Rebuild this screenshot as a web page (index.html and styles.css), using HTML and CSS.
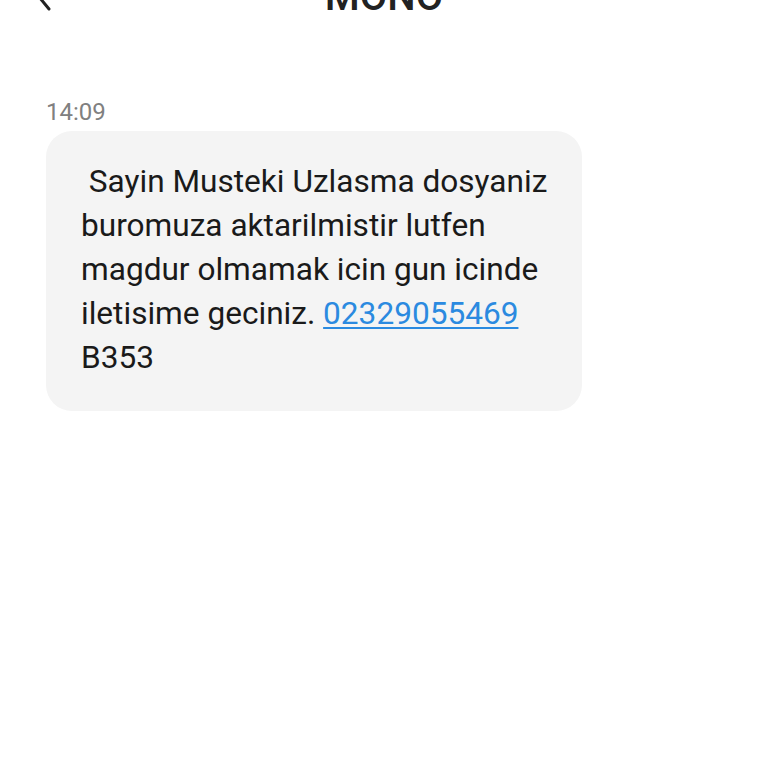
FILE: index.html
```html
<!DOCTYPE html>
<html lang="tr">
<head>
<meta charset="utf-8">
<title>MONO</title>
<link rel="stylesheet" href="styles.css">
</head>
<body>
<header class="topbar">
  <div class="back">
    <svg class="back-icon" width="30" height="40" viewBox="0 0 30 40">
      <path d="M23 0 L9 15 L23 32" fill="none" stroke="#222" stroke-width="3" stroke-linecap="round" stroke-linejoin="round"/>
    </svg>
  </div>
  <h1 class="title">MONO</h1>
  <div></div>
</header>
<main class="thread">
  <div class="time">14:09</div>
  <div class="bubble">
    <p class="msg">&nbsp;Sayin Musteki Uzlasma dosyaniz buromuza aktarilmistir lutfen magdur olmamak icin gun icinde iletisime geciniz. <a class="link" href="#">02329055469</a> B353</p>
  </div>
</main>
</body>
</html>
```

FILE: styles.css
```css
html, body {
  margin: 0;
  padding: 0;
  background: #ffffff;
}
body {
  font-family: Roboto, "Noto Sans", "Liberation Sans", sans-serif;
  color: #1c1c1c;
  width: 768px;
  height: 768px;
  overflow: hidden;
}
.topbar {
  display: grid;
  grid-template-columns: 1fr auto 1fr;
  height: 40px;
  margin-top: -23px;
}
.back {
  padding-left: 26px;
}
.back-icon {
  display: block;
}
.title {
  margin: 0;
  font-size: 40px;
  line-height: 40px;
  font-weight: 500;
  color: #222222;
  letter-spacing: 0;
}
.thread {
  padding: 81px 0 0 46px;
}
.time {
  font-size: 24px;
  line-height: 28px;
  color: #808080;
  margin-bottom: 5px;
}
.bubble {
  box-sizing: border-box;
  width: 536px;
  background: #f4f4f4;
  border-radius: 26px;
  padding: 29px 26px 31px 35px;
}
.msg {
  margin: 0;
  font-size: 31.6px;
  line-height: 44px;
  color: #1a1a1a;
}
.link {
  color: #2b8ae0;
  text-decoration: underline;
  text-underline-offset: 3px;
  text-decoration-thickness: 2px;
}
```
